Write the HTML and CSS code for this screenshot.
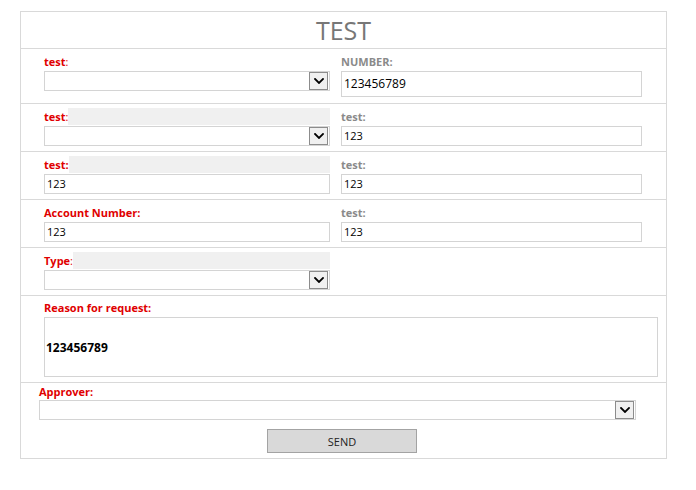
FILE: index.html
```html
<!DOCTYPE html>
<html lang="en">
<head>
<meta charset="utf-8">
<title>TEST</title>
<link rel="stylesheet" href="styles.css">
</head>
<body>
<form class="sheet">
  <h1 class="sheet-title">TEST</h1>

  <div class="row row-tall">
    <div class="field">
      <div class="label-line plain"><span class="label req">test</span><span class="colon">:</span></div>
      <div class="select"><span class="select-btn"><svg viewBox="0 0 10 6" width="10" height="6"><polyline points="1,1 5,5 9,1" /></svg></span></div>
    </div>
    <div class="field">
      <div class="label-line plain"><span class="label opt">NUMBER:</span></div>
      <div class="input input-lg">123456789</div>
    </div>
  </div>

  <div class="row">
    <div class="field">
      <div class="label-line"><span class="label req">test</span><span class="colon">:</span><span class="fill"></span></div>
      <div class="select"><span class="select-btn"><svg viewBox="0 0 10 6" width="10" height="6"><polyline points="1,1 5,5 9,1" /></svg></span></div>
    </div>
    <div class="field">
      <div class="label-line plain"><span class="label opt">test:</span></div>
      <div class="input">123</div>
    </div>
  </div>

  <div class="row">
    <div class="field">
      <div class="label-line"><span class="label req">test:</span><span class="fill"></span></div>
      <div class="input">123</div>
    </div>
    <div class="field">
      <div class="label-line plain"><span class="label opt">test:</span></div>
      <div class="input">123</div>
    </div>
  </div>

  <div class="row">
    <div class="field">
      <div class="label-line plain"><span class="label req">Account Number:</span></div>
      <div class="input">123</div>
    </div>
    <div class="field">
      <div class="label-line plain"><span class="label opt">test:</span></div>
      <div class="input">123</div>
    </div>
  </div>

  <div class="row">
    <div class="field">
      <div class="label-line"><span class="label req">Type</span><span class="colon">:</span><span class="fill"></span></div>
      <div class="select"><span class="select-btn"><svg viewBox="0 0 10 6" width="10" height="6"><polyline points="1,1 5,5 9,1" /></svg></span></div>
    </div>
  </div>

  <div class="row row-reason">
    <div class="field wide">
      <div class="label-line plain"><span class="label req">Reason for request:</span></div>
      <div class="textarea">123456789</div>
    </div>
  </div>

  <div class="footer">
    <div class="label-line footer-label"><span class="label req">Approver:</span></div>
    <div class="select select-wide"><span class="select-btn"><svg viewBox="0 0 10 6" width="10" height="6"><polyline points="1,1 5,5 9,1" /></svg></span></div>
    <div class="actions"><button type="button" class="send">SEND</button></div>
  </div>
</form>
</body>
</html>
```

FILE: styles.css
```css
* {
  box-sizing: border-box;
}

body {
  margin: 0;
  background: #ffffff;
  font-family: "Open Sans", "Liberation Sans", sans-serif;
  color: #000;
}

.sheet {
  width: 647px;
  margin: 11px 0 0 20px;
  border: 1px solid #d9d9d9;
}

.sheet-title {
  margin: 0;
  height: 37px;
  line-height: 36px;
  font-size: 25px;
  font-weight: 400;
  text-align: center;
  color: #777777;
  border-bottom: 1px solid #d9d9d9;
}

.row {
  display: grid;
  grid-template-columns: 286px 301px;
  column-gap: 11px;
  align-items: start;
  padding: 4px 0 5px 23px;
  border-bottom: 1px solid #d9d9d9;
}

.row.row-tall {
  padding-bottom: 6px;
}

.row.row-reason {
  padding-top: 3px;
}

.field.wide {
  grid-column: 1 / span 2;
  width: 614px;
}

.label-line {
  display: flex;
  height: 17px;
  margin-bottom: 1px;
  line-height: 17px;
  font-size: 11px;
  font-weight: 700;
}

.label-line .fill {
  flex: 1;
  background: #f0f0f0;
}

.label.req {
  color: #e00000;
}

.colon {
  color: #e00000;
  font-weight: 400;
}

.label.opt {
  color: #8a8a8a;
}

.input {
  height: 20px;
  border: 1px solid #d4d4d4;
  padding: 0 2px;
  font-size: 11px;
  line-height: 18px;
  background: #fff;
}

.input.input-lg {
  height: 26px;
  font-size: 12px;
  line-height: 24px;
}

.select {
  display: flex;
  justify-content: flex-end;
  height: 20px;
  border: 1px solid #d4d4d4;
  background: #fff;
}

.select-btn {
  display: flex;
  align-items: center;
  justify-content: center;
  width: 19px;
  margin-right: 1px;
  border: 1px solid #8c8c8c;
  background: #f0f0f0;
}

.select-btn svg {
  display: block;
}

.select-btn polyline {
  fill: none;
  stroke: #000;
  stroke-width: 1.8;
  stroke-linecap: square;
}

.textarea {
  height: 60px;
  border: 1px solid #d4d4d4;
  padding: 0 2px 0 1px;
  display: flex;
  align-items: center;
  font-size: 12px;
  font-weight: 700;
}

.footer {
  padding: 1px 0 5px 18px;
}

.footer-label {
  height: 16px;
  line-height: 15px;
  margin-bottom: 0;
}

.select-wide {
  width: 597px;
}

.actions {
  display: flex;
  justify-content: center;
  padding-top: 9px;
  padding-right: 21px;
}

.send {
  width: 150px;
  height: 24px;
  border: 1px solid #a3a3a3;
  background: #d9d9d9;
  font-family: "Open Sans", "Liberation Sans", sans-serif;
  font-size: 11px;
  color: #222;
  padding: 0;
}
```
